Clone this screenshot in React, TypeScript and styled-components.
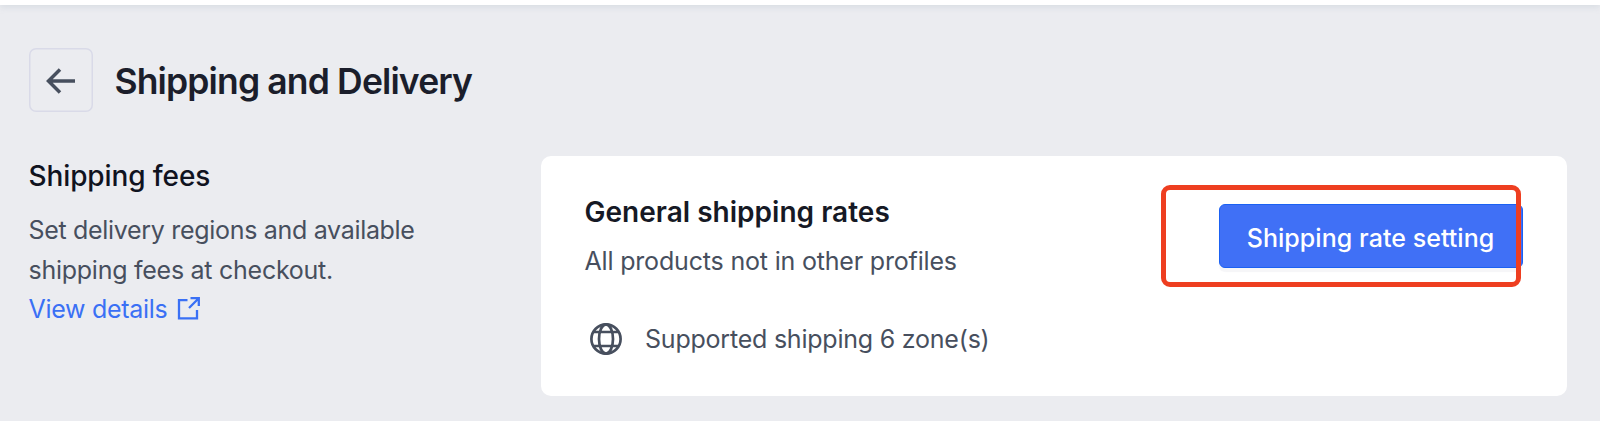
import React from "react";
import styled, { createGlobalStyle } from "styled-components";

const GlobalStyle = createGlobalStyle`
  * { box-sizing: border-box; }
  body { margin: 0; background: #ebecf0; }
`;

const Page = styled.div`
  height: 421px;
  overflow: hidden;
  background: #ebecf0;
  color: #474f5e;
  font-family: Inter, "Liberation Sans", sans-serif;
`;

const TopBar = styled.div`
  height: 5px;
  background: #fff;
  box-shadow: 0 1px 7px rgba(160, 178, 190, 0.4);
`;

const Header = styled.header`
  display: flex;
  align-items: center;
  gap: 21.5px;
  padding: 43px 0 0 29px;
`;

const BackButton = styled.button`
  display: flex;
  align-items: center;
  justify-content: center;
  width: 64px;
  height: 64px;
  padding: 1px 0 0;
  border: 0;
  border-radius: 7px;
  background: transparent;
  box-shadow: inset 0 0 0 1.5px #d9dae8;
`;

const Title = styled.h1`
  margin: 3px 0 0;
  font-size: 35.5px;
  font-weight: 600;
  line-height: 44px;
  letter-spacing: -0.86px;
  color: #1b1e2b;
  white-space: nowrap;
`;

const Content = styled.main`
  display: grid;
  grid-template-columns: 512.5px 1026px;
  padding: 44px 0 0 28.5px;
`;

const Section = styled.section`
  white-space: nowrap;
`;

const SectionTitle = styled.h2`
  margin: 2px 0 17px;
  font-size: 28px;
  font-weight: 500;
  line-height: 36px;
  letter-spacing: -0.11px;
  color: #10131f;
`;

const TextLine = styled.div<{ $spacing?: number }>`
  font-size: 25px;
  line-height: 39.5px;
  letter-spacing: ${(p) => p.$spacing ?? 0}px;
`;

const DetailsLink = styled.a`
  display: flex;
  align-items: center;
  gap: 9.5px;
  font-size: 25px;
  line-height: 39.5px;
  letter-spacing: -0.3px;
  color: #3a70f5;
`;

const Card = styled.section`
  height: 240px;
  padding: 37px 44.5px 0 43.5px;
  border-radius: 10px;
  background: #fff;
  white-space: nowrap;
`;

const CardTop = styled.div`
  display: flex;
  justify-content: space-between;
`;

const CardTitle = styled.h3`
  margin: 0 0 10px;
  font-size: 28px;
  font-weight: 600;
  line-height: 39px;
  letter-spacing: 0.02px;
  color: #161925;
`;

const ActionArea = styled.div`
  position: relative;
  padding-top: 11px;
`;

const PrimaryButton = styled.button`
  width: 304px;
  height: 64px;
  padding: 3px 0 0;
  border: 1px solid #1b61f3;
  border-radius: 6px;
  background: #4070f6;
  box-shadow: 0 4px 1px rgba(20, 30, 70, 0.04);
  color: #fff;
  font: 500 25px/36px Inter, "Liberation Sans", sans-serif;
  letter-spacing: 0.05px;
`;

const Highlight = styled.div`
  position: absolute;
  top: -8px;
  left: -58px;
  width: 360px;
  height: 102px;
  border: 5px solid #ee3e20;
  border-radius: 9px;
  pointer-events: none;
`;

const ZoneRow = styled.div`
  display: flex;
  align-items: center;
  gap: 23px;
  padding: 38px 0 0 5.5px;
`;

export default function App() {
  return (
    <Page>
      <GlobalStyle />
      <TopBar />
      <Header>
        <BackButton aria-label="Back">
          <svg width="30" height="26" viewBox="0 0 30 26" fill="none" stroke="#474f5e" strokeWidth="3.5">
            <path d="M29 13H2.5M14 1.5L2.5 13L14 24.5" />
          </svg>
        </BackButton>
        <Title>Shipping and Delivery</Title>
      </Header>
      <Content>
        <Section>
          <SectionTitle>Shipping fees</SectionTitle>
          <TextLine $spacing={-0.31}>Set delivery regions and available</TextLine>
          <TextLine $spacing={-0.26}>shipping fees at checkout.</TextLine>
          <DetailsLink>
            <span>View details</span>
            <svg width="24" height="26" viewBox="0 0 24 26" fill="none" stroke="#3a70f5" strokeWidth="2.3">
              <path d="M10.5 3.2H2V21.4H20V13M12 11L21.5 1.5M13.5 1.2H21.8V9" />
            </svg>
          </DetailsLink>
        </Section>
        <Card>
          <CardTop>
            <div>
              <CardTitle>General shipping rates</CardTitle>
              <TextLine $spacing={-0.18}>All products not in other profiles</TextLine>
            </div>
            <ActionArea>
              <PrimaryButton>Shipping rate setting</PrimaryButton>
              <Highlight />
            </ActionArea>
          </CardTop>
          <ZoneRow>
            <svg width="32" height="32" viewBox="0 0 32 32" fill="none" stroke="#474f5e" strokeWidth="2.7">
              <circle cx="16" cy="16" r="14.6" />
              <ellipse cx="16" cy="16" rx="7" ry="14.6" />
              <path d="M4 9H28M4 23H28" />
            </svg>
            <TextLine $spacing={-0.22}>Supported shipping 6 zone(s)</TextLine>
          </ZoneRow>
        </Card>
      </Content>
    </Page>
  );
}
